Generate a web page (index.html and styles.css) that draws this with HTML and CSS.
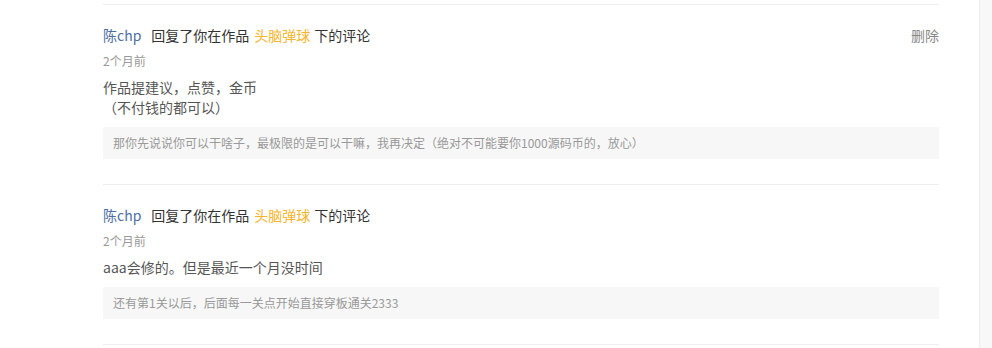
FILE: index.html
```html
<!DOCTYPE html>
<html lang="zh">
<head>
<meta charset="utf-8">
<link rel="stylesheet" href="styles.css">
</head>
<body>
<div class="page">
  <main class="main">
    <ul class="list">
      <li class="item">
        <div class="head">
          <div class="title"><a class="user">陈chp</a><span class="act">回复了你在作品</span><a class="work">头脑弹球</a><span>下的评论</span></div>
          <a class="del">删除</a>
        </div>
        <div class="time">2个月前</div>
        <div class="content">作品提建议，点赞，金币<br>（不付钱的都可以）</div>
        <div class="reply">那你先说说你可以干啥子，最极限的是可以干嘛，我再决定（绝对不可能要你1000源码币的，放心）</div>
      </li>
      <li class="item">
        <div class="head">
          <div class="title"><a class="user">陈chp</a><span class="act">回复了你在作品</span><a class="work">头脑弹球</a><span>下的评论</span></div>
        </div>
        <div class="time">2个月前</div>
        <div class="content">aaa会修的。但是最近一个月没时间</div>
        <div class="reply">还有第1关以后，后面每一关点开始直接穿板通关2333</div>
      </li>
    </ul>
  </main>
  <aside class="rail"></aside>
</div>
</body>
</html>
```
FILE: styles.css
```css
html, body {
  margin: 0;
  padding: 0;
  background: #fff;
}
body {
  font-family: "Noto Sans CJK SC", "Noto Sans", "Liberation Sans", sans-serif;
  color: #333;
}
.page {
  display: flex;
  height: 348px;
  overflow: hidden;
}
.main {
  flex: 0 0 979px;
  padding: 4px 0 0 103px;
  box-sizing: border-box;
}
.rail {
  flex: 1;
  background: #f8f8f8;
  border-left: 1px solid #f0f0f0;
}
.list {
  list-style: none;
  margin: 0;
  padding: 0;
  width: 836px;
}
.item {
  border-top: 1px solid #eee;
  padding: 20px 0 25px;
}
.item:last-child {
  border-bottom: 1px solid #eee;
}
.head {
  display: flex;
  justify-content: space-between;
  height: 20px;
  line-height: 20px;
  font-size: 14px;
}
.user {
  color: #4d6ea3;
  margin-right: 10px;
}
.act {
  margin-right: 5px;
}
.work {
  color: #f7b52c;
  margin-right: 4px;
}
.del {
  color: #888;
}
.time {
  margin-top: 6px;
  font-size: 12px;
  line-height: 20px;
  color: #999;
}
.content {
  margin-top: 6px;
  font-size: 14px;
  line-height: 20px;
  color: #555;
}
.reply {
  margin-top: 10px;
  background: #f7f7f7;
  padding: 0 10px;
  height: 32px;
  line-height: 32px;
  font-size: 12px;
  color: #999;
}
```
